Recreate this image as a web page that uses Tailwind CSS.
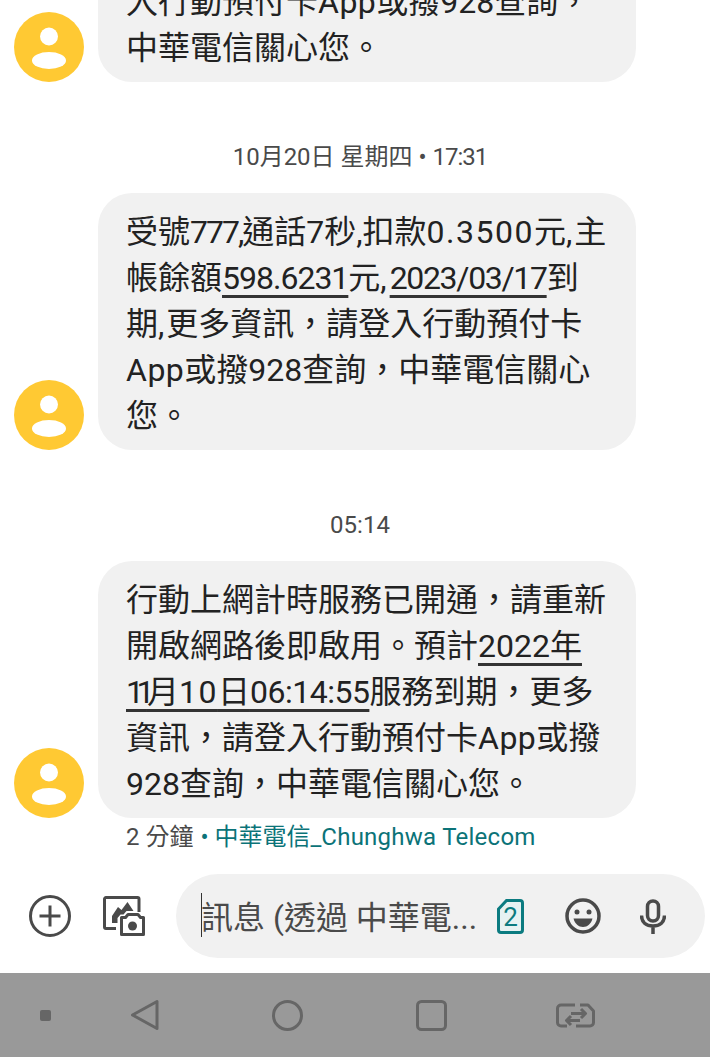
<!DOCTYPE html>
<html lang="zh-Hant">
<head>
  <meta charset="UTF-8">
  <meta name="viewport" content="width=device-width, initial-scale=1.0">
  <title>訊息</title>
  <script src="https://cdn.jsdelivr.net/npm/@tailwindcss/browser@4"></script>
</head>
<body class="bg-white">
  <div class="w-[710px] h-[1057px] overflow-hidden flex flex-col font-['Roboto','Noto_Sans_CJK_TC',sans-serif]">

    <!-- messages -->
    <div class="flex-1 min-h-0 pl-[14px]">
      <div class="flex items-end -mt-[37px]">
        <svg class="w-[70px] h-[70px] shrink-0" viewBox="0 0 70 70"><circle cx="35" cy="35" r="35" fill="#ffc933"/><circle cx="35" cy="24.5" r="9" fill="#fff"/><ellipse cx="35" cy="48.5" rx="17" ry="8.5" fill="#fff"/></svg>
        <div class="ml-[14px] w-[538px] rounded-[34px] bg-[#f1f1f1] pl-[28px] pt-[16px] pb-[11px] text-[32px] leading-[46px] text-[#222]">入行動預付卡<span class="tracking-[0.5px]">App</span>或撥928查詢，<br>中華電信關心您。</div>
      </div>

      <div class="mt-[60px] h-[30px] -ml-[14px] pl-[10px] text-center text-[24px] leading-[30px] text-[#4a4a4a]">10月20日 星期四 • <span class="tracking-[-1px]">17:31</span></div>

      <div class="mt-[21px] flex items-end">
        <svg class="w-[70px] h-[70px] shrink-0" viewBox="0 0 70 70"><circle cx="35" cy="35" r="35" fill="#ffc933"/><circle cx="35" cy="24.5" r="9" fill="#fff"/><ellipse cx="35" cy="48.5" rx="17" ry="8.5" fill="#fff"/></svg>
        <div class="ml-[14px] w-[538px] rounded-[34px] bg-[#f1f1f1] pl-[28px] pt-[16px] pb-[11px] text-[32px] leading-[46px] text-[#222] whitespace-nowrap">受號<span class="tracking-[-2px]">777,</span>通話7秒,扣款<span class="tracking-[1.5px]">0.3500</span>元<span class="tracking-[2px]">,</span>主<br>帳餘額<span class="tracking-[-1px] underline underline-offset-[6px] decoration-[3px] decoration-[#333] [text-decoration-skip-ink:none]">598.6231</span>元<span class="tracking-[3px]">,</span><span class="tracking-[-1.33px] underline underline-offset-[6px] decoration-[3px] decoration-[#333] [text-decoration-skip-ink:none]">2023/03/17</span>到<br>期<span class="tracking-[2px]">,</span>更多資訊，請登入行動預付卡<br><span class="tracking-[0.5px]">App</span>或撥928查詢，中華電信關心<br>您。</div>
      </div>

      <div class="mt-[60px] h-[30px] -ml-[14px] pl-[10px] text-center text-[24px] leading-[30px] text-[#4a4a4a]">05:14</div>

      <div class="mt-[21px] flex items-end">
        <svg class="w-[70px] h-[70px] shrink-0" viewBox="0 0 70 70"><circle cx="35" cy="35" r="35" fill="#ffc933"/><circle cx="35" cy="24.5" r="9" fill="#fff"/><ellipse cx="35" cy="48.5" rx="17" ry="8.5" fill="#fff"/></svg>
        <div class="ml-[14px] w-[538px] rounded-[34px] bg-[#f1f1f1] pl-[28px] pt-[16px] pb-[11px] text-[32px] leading-[46px] text-[#222] whitespace-nowrap">行動上網計時服務已開通，請重新<br>開啟網路後即啟用。預計<span class="underline underline-offset-[6px] decoration-[3px] decoration-[#333] [text-decoration-skip-ink:none]">2022年</span><br><span class="underline underline-offset-[6px] decoration-[3px] decoration-[#333] [text-decoration-skip-ink:none]"><span class="tracking-[-7.5px]">11</span>月<span class="tracking-[1.5px]">10</span>日<span class="tracking-[-0.5px]">06:14:55</span></span>服務到期，更多<br>資訊，請登入行動預付卡<span class="tracking-[0.5px]">App</span>或撥<br>928查詢，中華電信關心您。</div>
      </div>

      <div class="mt-[4px] ml-[112px] text-[24px] leading-[30px] text-[#4a4a4a] whitespace-nowrap">2 分鐘 <span class="ml-[1px] text-[#0b7378]">• 中華電信_<span class="tracking-[0.25px]">Chunghwa Telecom</span></span></div>
    </div>

    <!-- compose bar -->
    <div class="h-[84px] flex items-center shrink-0 mb-[15px]">
      <svg class="ml-[29px] w-[42px] h-[42px] shrink-0" viewBox="0 0 42 42" fill="none" stroke="#4a4a4a" stroke-width="3"><circle cx="21" cy="21" r="19.5"/><path d="M21 10.5v21M10.5 21h21"/></svg>
      <svg class="ml-[32px] w-[43px] h-[43px] shrink-0" viewBox="0 0 43 43">
        <path d="M13 33.500H3A1.500 1.500 0 0 1 1.500 32V4A1.500 1.500 0 0 1 3 2.500h31.500A1.500 1.500 0 0 1 36 4v13" fill="none" stroke="#4a4a4a" stroke-width="3"/>
        <path d="M9 28v-7l6-9 3.500 3 6-8 6 9h-7l-3 3.500h-3l-3 3.500v5z" fill="#4a4a4a"/>
        <path d="M18.500 22.500h4l2.500-3h10l2.500 3h3v17h-22z" fill="#fff" stroke="#4a4a4a" stroke-width="3" stroke-linejoin="round"/>
        <circle cx="29.500" cy="31" r="4.500" fill="#4a4a4a"/>
      </svg>
      <div class="ml-[30px] w-[529px] h-[84px] rounded-[42px] bg-[#f1f1f1] flex items-center shrink-0 relative">
        <div class="absolute left-[25px] top-[19px] w-px h-[44px] bg-[#333]"></div>
        <div class="ml-[25px] pt-[3px] w-[280px] text-[32px] leading-[46px] text-[#4a4a4a] whitespace-nowrap overflow-hidden">訊息 (透過 中華電...</div>
        <svg class="ml-[16px] w-[27px] h-[35px] shrink-0" viewBox="0 0 27 35" fill="none"><path d="M9.500 1.500H23a2.500 2.500 0 0 1 2.500 2.500v27a2.500 2.500 0 0 1-2.500 2.500H4A2.500 2.500 0 0 1 1.500 31V10z" stroke="#0b7b80" stroke-width="3" fill="#e6f2f2"/><text x="13.500" y="27" text-anchor="middle" font-size="26" font-family="Roboto" fill="#0b7b80">2</text></svg>
        <svg class="ml-[41px] w-[36px] h-[36px] shrink-0" viewBox="0 0 36 36"><circle cx="18" cy="18" r="16" fill="none" stroke="#4a4a4a" stroke-width="3.500"/><circle cx="12" cy="14" r="2.500" fill="#4a4a4a"/><circle cx="24" cy="14" r="2.500" fill="#4a4a4a"/><path d="M8.500 20.500h19C26 26 22.500 29 18 29s-8-3-9.500-8.500z" fill="#4a4a4a"/></svg>
        <svg class="ml-[39px] w-[26px] h-[35px] shrink-0" viewBox="0 0 26 35"><rect x="7.500" y="2" width="11" height="20" rx="5.500" fill="none" stroke="#4a4a4a" stroke-width="3.500"/><path d="M1.500 16.500c0 7 5 10.500 11.500 10.500s11.500-3.500 11.500-10.500M13 27v8" fill="none" stroke="#4a4a4a" stroke-width="3.500"/></svg>
      </div>
    </div>

    <!-- nav bar -->
    <div class="h-[84px] shrink-0 bg-[#999] flex items-center">
      <div class="ml-[40px] w-[11px] h-[11px] rounded-[2px] bg-[#666] shrink-0"></div>
      <svg class="ml-[80px] w-[28px] h-[32px] shrink-0" viewBox="0 0 28 32" fill="none" stroke="#666" stroke-width="3" stroke-linejoin="round"><path d="M26 2.500v27L1.500 16z"/></svg>
      <svg class="ml-[113px] w-[31px] h-[31px] shrink-0" viewBox="0 0 31 31" fill="none" stroke="#666" stroke-width="3"><circle cx="15.500" cy="15.500" r="14"/></svg>
      <svg class="ml-[113px] w-[31px] h-[31px] shrink-0" viewBox="0 0 31 31" fill="none" stroke="#666" stroke-width="3"><rect x="1.500" y="1.500" width="28" height="28" rx="4"/></svg>
      <svg class="ml-[109px] w-[39px] h-[25px] shrink-0" viewBox="0 0 39 25" fill="none" stroke="#666" stroke-width="3" stroke-linejoin="round"><path d="M19 2H5a3.500 3.500 0 0 0-3.500 3.500v14A3.500 3.500 0 0 0 5 23h6M20 23h14a3.500 3.500 0 0 0 3.500-3.500V8L32 2H24"/><path d="M15 10.500h14M25 6l4.500 4.500L25 15M24 17.500H11M15 13 10.500 17.500l4.500 4.500"/></svg>
    </div>
  </div>
</body>
</html>
